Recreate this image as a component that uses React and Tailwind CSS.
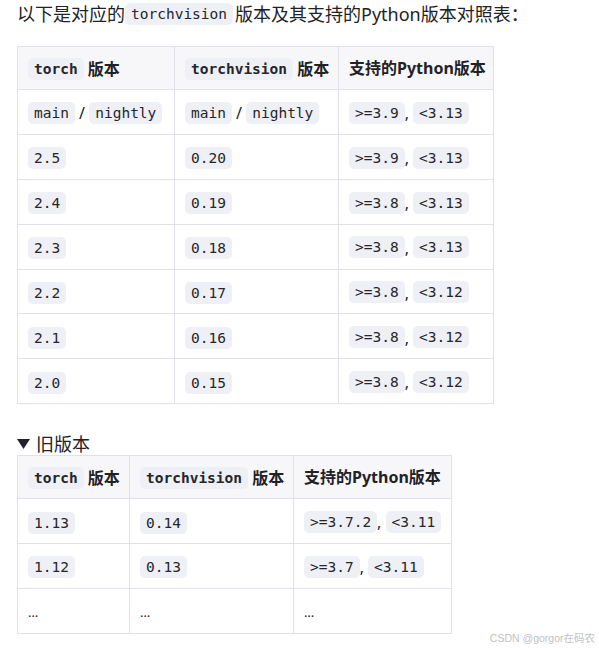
import React from "react";

const sans = "font-['Noto_Sans','Noto_Sans_CJK_SC',sans-serif]";

function Code({ children, bold }) {
  return (
    <code
      className={`inline-block h-[22px] rounded-[5px] bg-[#eff0f5] px-[6px] align-middle font-['DejaVu_Sans_Mono',monospace] text-[14.5px] leading-[22px] text-[#25262b] ${bold ? "font-bold" : ""}`}
    >
      {children}
    </code>
  );
}

function Py({ a, b }) {
  return (
    <>
      <Code>{a}</Code>
      <span className="align-middle">, </span>
      <Code>{b}</Code>
    </>
  );
}

const Ell = () => <span className="text-[13px] leading-none">…</span>;

const mainRows = [
  ["2.5", "0.20", ">=3.9", "<3.13"],
  ["2.4", "0.19", ">=3.8", "<3.13"],
  ["2.3", "0.18", ">=3.8", "<3.13"],
  ["2.2", "0.17", ">=3.8", "<3.12"],
  ["2.1", "0.16", ">=3.8", "<3.12"],
  ["2.0", "0.15", ">=3.8", "<3.12"],
];

const border = "border border-[#e2e1ea] px-[10px] align-middle whitespace-nowrap";
const cell = `${border} h-[44.9px]`;
const head = `${border} h-[43px] text-left font-bold`;

function VersionTable({ className, widths, children }) {
  return (
    <table className={`table-fixed border-collapse text-[16px] text-[#222226] ${sans} ${className}`}>
      <colgroup>
        <col style={{ width: widths[0] }} />
        <col style={{ width: widths[1] }} />
        <col />
      </colgroup>
      <thead>
        <tr className="bg-[#f7f7f9]">
          <th className={head}>
            <Code bold>torch</Code> <span className="align-middle">版本</span>
          </th>
          <th className={head}>
            <Code bold>torchvision</Code> <span className="align-middle">版本</span>
          </th>
          <th className={head}>支持的Python版本</th>
        </tr>
      </thead>
      <tbody>{children}</tbody>
    </table>
  );
}

export default function App() {
  return (
    <div className={`relative h-[648px] w-[599px] overflow-hidden bg-white px-[17px] text-[#222226] ${sans}`}>
      <p className="flex h-[28px] items-center text-[18px]">
        <span>以下是对应的</span>
        <Code>torchvision</Code>
        <span className="ml-[2px]">版本及其支持的Python版本对照表：</span>
      </p>

      <div className="mt-[18px]">
        <VersionTable className="w-[477px]" widths={["157px", "164px"]}>
          <tr>
            <td className={cell}>
              <Code>main</Code> <span className="align-middle">/</span> <Code>nightly</Code>
            </td>
            <td className={cell}>
              <Code>main</Code> <span className="align-middle">/</span> <Code>nightly</Code>
            </td>
            <td className={cell}>
              <Py a=">=3.9" b="<3.13" />
            </td>
          </tr>
          {mainRows.map((r) => (
            <tr key={r[0]}>
              <td className={cell}>
                <Code>{r[0]}</Code>
              </td>
              <td className={cell}>
                <Code>{r[1]}</Code>
              </td>
              <td className={cell}>
                <Py a={r[2]} b={r[3]} />
              </td>
            </tr>
          ))}
        </VersionTable>
      </div>

      <div className="mt-[29px] flex h-[22px] items-center text-[18px]">
        <svg width="13" height="10" viewBox="0 0 13 10" className="mr-[6px]">
          <path d="M0 0 H13 L6.5 10 Z" fill="#222226" />
        </svg>
        <span>旧版本</span>
      </div>

      <VersionTable className="w-[435px]" widths={["112px", "164px"]}>
        <tr>
          <td className={cell}>
            <Code>1.13</Code>
          </td>
          <td className={cell}>
            <Code>0.14</Code>
          </td>
          <td className={cell}>
            <Py a=">=3.7.2" b="<3.11" />
          </td>
        </tr>
        <tr>
          <td className={cell}>
            <Code>1.12</Code>
          </td>
          <td className={cell}>
            <Code>0.13</Code>
          </td>
          <td className={cell}>
            <Py a=">=3.7" b="<3.11" />
          </td>
        </tr>
        <tr>
          <td className={cell}>
            <Ell />
          </td>
          <td className={cell}>
            <Ell />
          </td>
          <td className={cell}>
            <Ell />
          </td>
        </tr>
      </VersionTable>

      <span className="absolute right-[4px] bottom-[5px] font-['Liberation_Sans','Noto_Sans_CJK_SC',sans-serif] text-[10.5px] leading-none text-[#c2c2c2]">
        CSDN @gorgor在码农
      </span>
    </div>
  );
}
